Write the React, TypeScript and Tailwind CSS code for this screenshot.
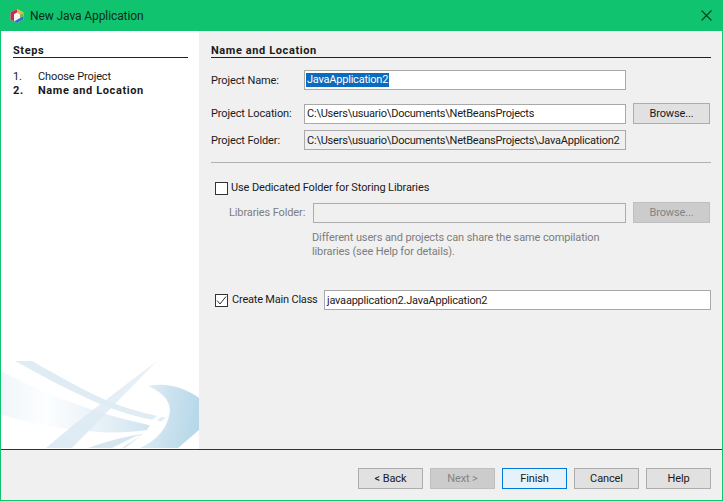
import React from "react";

const font = "font-['Roboto','Noto_Sans',sans-serif]";

function Field({ w, value, readOnly, disabled, selected }: { w: string; value?: string; readOnly?: boolean; disabled?: boolean; selected?: boolean }) {
  return (
    <div className={`${w} h-5 shrink-0 border pl-px flex items-center whitespace-nowrap overflow-hidden tracking-[-0.22px] ${disabled || readOnly ? "bg-[#f0f0f0]" : "bg-white"} ${disabled ? "border-[#adadad]" : "border-[#a9a9a9]"}`}>
      {selected ? <span className="bg-[#0b6bbd] text-white px-px">{value}</span> : <span className="pt-px pl-px">{value}</span>}
    </div>
  );
}

function Btn({ label, kind = "normal", w = "w-[65px]", h = "h-[21px]" }: { label: string; kind?: "normal" | "disabled" | "focus"; w?: string; h?: string }) {
  const cls =
    kind === "disabled"
      ? "bg-[#cccccc] border-[#bfbfbf] text-[#838383]"
      : kind === "focus"
        ? "bg-[#e5f1fb] border-[#0078d7] text-[#1a1a1a]"
        : "bg-[#e1e1e1] border-[#adadad] text-[#1a1a1a]";
  return <div className={`${w} ${h} shrink-0 border flex items-center justify-center ${cls}`}>{label}</div>;
}

function Check({ checked }: { checked?: boolean }) {
  return (
    <div className="w-[13px] h-[13px] mt-px border border-[#333333] bg-white flex items-center justify-center shrink-0">
      {checked && (
        <svg width="11" height="11" viewBox="0 0 11 11" fill="none" stroke="#333333" strokeWidth="1">
          <path d="M1 5.5 L4 9 L10 1.5" />
        </svg>
      )}
    </div>
  );
}

function Watermark() {
  return (
    <svg width="198" height="88" viewBox="1 362 198 88" className="block shrink-0">
      <defs>
        <linearGradient id="a" x1="0" y1="0" x2="1" y2="0">
          <stop offset="0" stopColor="#dcebf4" stopOpacity="0.45" />
          <stop offset="0.3" stopColor="#dcebf4" stopOpacity="0.06" />
          <stop offset="0.6" stopColor="#d6e7f2" stopOpacity="0.5" />
          <stop offset="1" stopColor="#d0e4f0" />
        </linearGradient>
        <linearGradient id="b" x1="0" y1="0" x2="1" y2="0.2">
          <stop offset="0" stopColor="#e6f0f6" />
          <stop offset="0.5" stopColor="#cde3ef" />
          <stop offset="1" stopColor="#b8d9ea" />
        </linearGradient>
        <linearGradient id="c" x1="0" y1="1" x2="1" y2="0">
          <stop offset="0" stopColor="#d9e8f2" />
          <stop offset="1" stopColor="#e6f0f6" />
        </linearGradient>
      </defs>
      <rect x="1" y="362" width="198" height="88" fill="#ffffff" />
      <path d="M1 372 C40 392 90 414 150 426 L147 431 C110 437 60 432 1 416 Z" fill="url(#a)" />
      <path d="M15 362 L32 362 C60 378 85 392 108 402 C125 409 150 416 167 419 L164 423 C135 418 115 411 100 405 C70 392 40 376 15 362 Z" fill="#e0ecf4" />
      <path d="M157 362 L72 449 L46 449 C80 420 120 390 157 362 Z" fill="url(#c)" opacity="0.9" />
      <path d="M88 449 C105 443 125 437 143 435 L125 449 Z" fill="#d5e6f0" />
      <path d="M112 449 L136 437 L142 436 L122 449 Z" fill="#ffffff" />
      <path d="M148 387 C165 383 185 388 199 399 L199 431 L178 449 L140 449 C158 441 168 428 170 412 C170 401 162 393 148 387 Z" fill="url(#b)" />
      <path d="M146 426 L168 408 L170 411 L152 426 Z" fill="#ffffff" opacity="0.85" />
      <path d="M155 428 L168 416 L168 420 L161 428 Z" fill="#ffffff" opacity="0.85" />
    </svg>
  );
}

function Row({ children, className = "" }: { children: React.ReactNode; className?: string }) {
  return <div className={`flex items-center ${className}`}>{children}</div>;
}

export default function App() {
  return (
    <div className={`w-[723px] h-[501px] flex flex-col overflow-hidden bg-[#10c46f] text-[11px] leading-[14px] tracking-[-0.12px] text-[#1a1a1a] ${font}`}>
      <div className="h-[31px] shrink-0 flex items-center pl-[9px] pr-[10px]">
        <svg width="16" height="16" viewBox="0 0 16 16" className="shrink-0">
          <path d="M8 1 L14.5 4.5 L14.5 11.5 L8 15 L1.5 11.5 L1.5 4.5 Z" fill="#f5f5ee" />
          <path d="M8 1 L1.5 4.5 L1.5 11.5 L5 13.4 L5 6.2 L8 4.5 Z" fill="#c42a5c" />
          <path d="M8 1 L14.5 4.5 L11 6.4 L8 4.5 Z" fill="#e9b93a" />
          <path d="M14.5 4.5 L14.5 8 L11 10 L11 6.4 Z" fill="#6fbf4a" />
          <path d="M14.5 8 L14.5 11.5 L8 15 L5 13.4 L11 10 Z" fill="#2f72c4" />
        </svg>
        <span className="ml-[5px] text-[12px] tracking-[-0.1px] text-[#0b2a18]">New Java Application</span>
        <svg width="11" height="11" viewBox="0 0 11 11" className="ml-auto mr-[1px]" stroke="#0d3a24" strokeWidth="1.1" fill="none">
          <path d="M0.5 0.5 L10.5 10.5 M10.5 0.5 L0.5 10.5" />
        </svg>
      </div>

      <div className="mx-px mb-px flex-1 flex flex-col bg-[#f0f0f0] min-h-0">
        <div className="h-[418px] shrink-0 flex">
          <div className="w-[198px] shrink-0 bg-white flex flex-col">
            <div className="flex-1 pl-3 pr-[11px] pt-[13px]">
              <div className="h-[14px] border-b border-[#222222] font-bold tracking-[0.6px]">Steps</div>
              <div className="mt-3 flex">
                <span className="w-[25px]">1.</span>
                <span>Choose Project</span>
              </div>
              <div className="flex font-bold tracking-[0.6px]">
                <span className="w-[25px]">2.</span>
                <span>Name and Location</span>
              </div>
            </div>
            <Watermark />
          </div>
          <div className="flex-1 flex flex-col pl-3 pr-[11px] pt-[13px]">
            <div className="h-[14px] border-b border-[#222222] font-bold tracking-[0.6px]">Name and Location</div>
            <Row className="mt-3">
              <span className="w-[93px] pt-px">Project Name:</span>
              <Field w="w-[322px]" value="JavaApplication2" selected />
            </Row>
            <Row className="mt-[13px]">
              <span className="w-[93px] pt-px">Project Location:</span>
              <Field w="w-[322px]" value="C:\Users\usuario\Documents\NetBeansProjects" />
              <div className="ml-[7px]"><Btn label="Browse..." w="w-[77px]" /></div>
            </Row>
            <Row className="mt-[6px]">
              <span className="w-[93px] pt-px">Project Folder:</span>
              <Field w="w-[322px]" value="C:\Users\usuario\Documents\NetBeansProjects\JavaApplication2" readOnly />
            </Row>
            <div className="mt-3 h-px bg-[#b0b0b0]" />
            <Row className="mt-[17px] pl-1">
              <Check />
              <span className="ml-[3px] pt-px">Use Dedicated Folder for Storing Libraries</span>
            </Row>
            <Row className="mt-[7px]">
              <span className="w-[102px] pl-[18px] pt-px text-[#7d7d7d]">Libraries Folder:</span>
              <Field w="w-[313px]" disabled />
              <div className="ml-[7px]"><Btn label="Browse..." kind="disabled" w="w-[77px]" /></div>
            </Row>
            <div className="mt-2 pl-[101px] text-[#7d7d7d]">
              <div>Different users and projects can share the same compilation</div>
              <div>libraries (see Help for details).</div>
            </div>
            <Row className="mt-[31px] pl-1">
              <Check checked />
              <span className="ml-1 w-[92px] tracking-[-0.2px]">Create Main Class</span>
              <Field w="w-[387px]" value="javaapplication2.JavaApplication2" />
            </Row>
          </div>
        </div>
        <div className="h-px shrink-0 bg-[#333333]" />
        <div className="flex-1 flex items-start justify-end gap-[7px] pt-[18px] pr-[11px]">
          <Btn label="< Back" />
          <Btn label="Next >" kind="disabled" />
          <Btn label="Finish" kind="focus" />
          <Btn label="Cancel" />
          <Btn label="Help" />
        </div>
      </div>
    </div>
  );
}
